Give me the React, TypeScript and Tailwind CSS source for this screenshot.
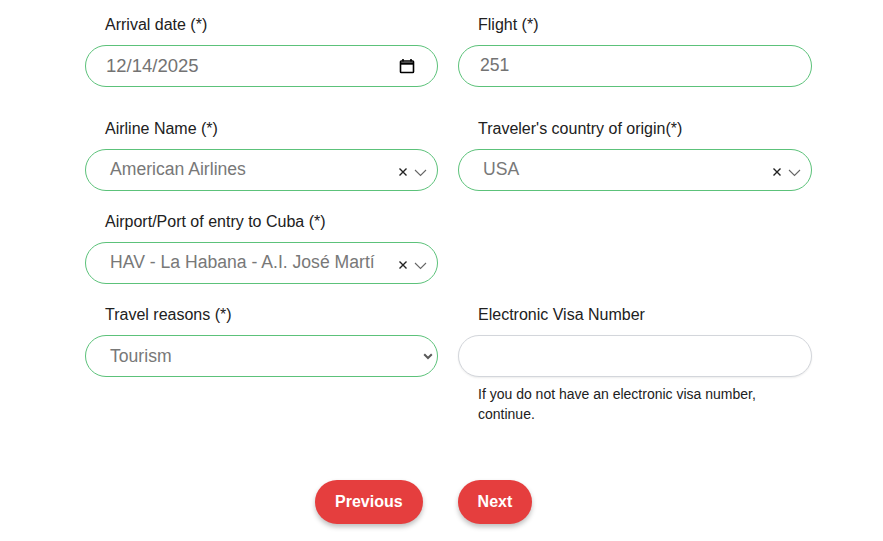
import type { ReactNode } from "react";

const FONT = { fontFamily: '"Liberation Sans", Arial, sans-serif' };

function Label({ children }: { children: ReactNode }) {
  return <div className="mb-2 pl-5 text-base leading-6 text-[#212121]">{children}</div>;
}

function Box({ children, green = true }: { children: ReactNode; green?: boolean }) {
  return (
    <div
      className={`flex h-[42px] items-center rounded-full border bg-white ${
        green ? "border-[#5cc27a]" : "border-[#d3d6db] shadow-[0_1px_2px_rgba(0,0,0,0.08)]"
      }`}
    >
      {children}
    </div>
  );
}

function ClearChevron() {
  return (
    <div className="ml-auto flex items-center gap-[6px] pr-[10px] pt-[3px]">
      <svg width="10" height="10" viewBox="0 0 10 10" className="text-[#222]">
        <path d="M1.5 1.5l7 7M8.5 1.5l-7 7" stroke="currentColor" strokeWidth="1.4" />
      </svg>
      <svg width="13" height="8" viewBox="0 0 13 8" className="mt-[3px] text-[#666]">
        <path d="M1 1l5.5 5.5L12 1" fill="none" stroke="currentColor" strokeWidth="1.1" />
      </svg>
    </div>
  );
}

function SelectBox({ value }: { value: string }) {
  return (
    <Box>
      <span className="-mt-[2px] pl-6 text-[17.6px] text-[#787878]">{value}</span>
      <ClearChevron />
    </Box>
  );
}

const ROW = "grid grid-cols-[353px_354px] gap-x-5";

export default function App() {
  return (
    <div className="min-h-screen bg-white pt-[13px]" style={FONT}>
      <div className="ml-[85px] w-[727px]">
        <div className={`mb-[30px] ${ROW}`}>
          <div>
            <Label>Arrival date (*)</Label>
            <Box>
              <span className="pl-5 text-[18.5px] text-[#737373]">12/14/2025</span>
              <svg width="16" height="16" viewBox="0 0 16 16" className="ml-auto mr-[22px] text-black">
                <path d="M4 1v2.5M12 1v2.5" stroke="currentColor" strokeWidth="1.6" />
                <rect x="1.5" y="3" width="13" height="11.5" rx="0.8" fill="none" stroke="currentColor" strokeWidth="1.6" />
                <path d="M1.5 5.5h13" stroke="currentColor" strokeWidth="2.4" />
              </svg>
            </Box>
          </div>
          <div>
            <Label>Flight (*)</Label>
            <Box>
              <span className="-mt-[2px] pl-[21px] text-[17.6px] text-[#737373]">251</span>
            </Box>
          </div>
        </div>

        <div className={`mb-[19px] ${ROW}`}>
          <div>
            <Label>Airline Name (*)</Label>
            <SelectBox value="American Airlines" />
          </div>
          <div>
            <Label>Traveler's country of origin(*)</Label>
            <SelectBox value="USA" />
          </div>
        </div>

        <div className={`mb-[19px] ${ROW}`}>
          <div>
            <Label>Airport/Port of entry to Cuba (*)</Label>
            <SelectBox value="HAV - La Habana - A.I. José Martí" />
          </div>
          <div />
        </div>

        <div className={ROW}>
          <div>
            <Label>Travel reasons (*)</Label>
            <Box>
              <span className="pl-6 text-[17.6px] text-[#787878]">Tourism</span>
              <svg width="10" height="7" viewBox="0 0 10 7" className="ml-auto mr-[4px] text-[#5a5a5a]">
                <path d="M1.2 1.2L5 5l3.8-3.8" fill="none" stroke="currentColor" strokeWidth="2" />
              </svg>
            </Box>
          </div>
          <div>
            <Label>Electronic Visa Number</Label>
            <Box green={false}>
              <span />
            </Box>
            <p className="mt-[7px] pl-5 text-sm leading-5 text-[#212121]">
              If you do not have an electronic visa number,
              <br />
              continue.
            </p>
          </div>
        </div>

        <div className="mt-[56px] flex gap-[35px] pl-[230px]">
          <button className="h-[44px] rounded-full bg-[#e53e3e] px-5 text-base font-bold text-white shadow-[0_3px_5px_rgba(0,0,0,0.25)]">
            Previous
          </button>
          <button className="h-[44px] rounded-full bg-[#e53e3e] px-5 text-base font-bold text-white shadow-[0_3px_5px_rgba(0,0,0,0.25)]">
            Next
          </button>
        </div>
      </div>
    </div>
  );
}
